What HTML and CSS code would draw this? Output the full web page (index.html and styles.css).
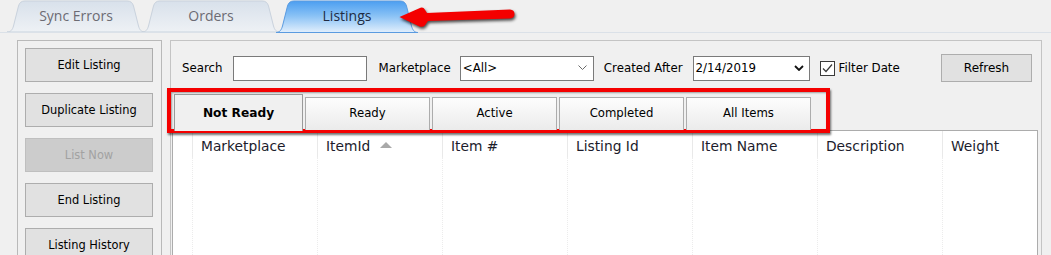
FILE: index.html
```html
<!DOCTYPE html>
<html>
<head>
<meta charset="utf-8">
<title>Listings</title>
<link rel="stylesheet" href="styles.css">
</head>
<body>
<div class="app">
  <div class="tabstrip">
    <div class="ttab">
      <svg class="tshape" width="138" height="32" viewBox="0 0 138 32">
        <defs>
          <linearGradient id="gU" x1="0" y1="0" x2="0" y2="1">
            <stop offset="0" stop-color="#d8e1eb"/>
            <stop offset="1" stop-color="#eef1f5"/>
          </linearGradient>
          <linearGradient id="gS" x1="0" y1="0" x2="0" y2="1">
            <stop offset="0" stop-color="#4c9ef0"/>
            <stop offset="0.45" stop-color="#86c0f5"/>
            <stop offset="1" stop-color="#e2effc"/>
          </linearGradient>
        </defs>
        <path d="M0,32 C4,32 5.5,29.5 6.5,26 L11.5,6 C12.5,2.5 14.5,1 18,1 L120,1 C123.5,1 125.5,2.5 126.5,6 L131.5,26 C132.5,29.5 134,32 138,32 Z" fill="url(#gU)" stroke="#c9d2dd" stroke-width="1"/>
      </svg>
      <span class="tlabel">Sync Errors</span>
    </div>
    <div class="ttab">
      <svg class="tshape" width="138" height="32" viewBox="0 0 138 32">
        <path d="M0,32 C4,32 5.5,29.5 6.5,26 L11.5,6 C12.5,2.5 14.5,1 18,1 L120,1 C123.5,1 125.5,2.5 126.5,6 L131.5,26 C132.5,29.5 134,32 138,32 Z" fill="url(#gU)" stroke="#c9d2dd" stroke-width="1"/>
      </svg>
      <span class="tlabel">Orders</span>
    </div>
    <div class="ttab sel">
      <svg class="tshape" width="142" height="33" viewBox="0 0 142 33">
        <path d="M0,32.5 C4,32.5 5.5,29.5 6.5,26 L11.5,6 C12.5,2.5 14.5,1 18,1 L124,1 C127.5,1 129.5,2.5 130.5,6 L135.5,26 C136.5,29.5 138,32.5 142,32.5 Z" fill="url(#gS)" stroke="#5a9be0" stroke-width="1"/>
      </svg>
      <span class="tlabel">Listings</span>
    </div>
  </div>

  <div class="main">
    <div class="leftpanel">
      <button class="btn">Edit Listing</button>
      <button class="btn">Duplicate Listing</button>
      <button class="btn disabled">List Now</button>
      <button class="btn">End Listing</button>
      <button class="btn">Listing History</button>
    </div>

    <div class="rightpanel">
      <div class="toolbar">
        <span class="lbl">Search</span>
        <div class="field search"></div>
        <span class="lbl lbl-mkt">Marketplace</span>
        <div class="field select mkt">
          <span>&lt;All&gt;</span>
          <svg class="chev" width="9" height="5" viewBox="0 0 9 5"><path d="M0.5,0.5 L4.5,4.5 L8.5,0.5" fill="none" stroke="#6a6a6a" stroke-width="1"/></svg>
        </div>
        <span class="lbl lbl-created">Created After</span>
        <div class="field select date">
          <span>2/14/2019</span>
          <svg class="chev" width="10" height="6" viewBox="0 0 10 6"><path d="M1,1 L5,5 L9,1" fill="none" stroke="#111" stroke-width="1.8"/></svg>
        </div>
        <span class="check"><svg width="13" height="13" viewBox="0 0 13 13"><path d="M2,6.5 L5,9.5 L11,2.5" fill="none" stroke="#3a3a3a" stroke-width="1.2"/></svg></span>
        <span class="lbl lbl-filter">Filter Date</span>
        <button class="btn refresh">Refresh</button>
      </div>

      <div class="tabctl">
        <div class="subtabs">
          <div class="stab sel">Not Ready</div>
          <div class="stab">Ready</div>
          <div class="stab">Active</div>
          <div class="stab">Completed</div>
          <div class="stab">All Items</div>
        </div>
        <div class="page">
          <div class="grid">
            <div class="hc rowhdr"></div>
            <div class="hc">Marketplace</div>
            <div class="hc">ItemId<span class="sort"></span></div>
            <div class="hc">Item #</div>
            <div class="hc">Listing Id</div>
            <div class="hc">Item Name</div>
            <div class="hc">Description</div>
            <div class="hc last">Weight</div>
            <div class="bc"></div>
            <div class="bc"></div>
            <div class="bc"></div>
            <div class="bc"></div>
            <div class="bc"></div>
            <div class="bc"></div>
            <div class="bc"></div>
            <div class="bc last"></div>
          </div>
        </div>
      </div>
    </div>
  </div>

  <div class="highlight"></div>
  <svg class="arrow" width="125" height="30" viewBox="395 2 125 30">
    <path d="M399.5,17 L420.5,7.8 Q423.5,7 424.8,9.5 L427,13 L510,9.5 Q514.5,9.8 514.5,14 Q514.5,18.2 510,18.5 L428,21 L425,25.2 Q423,27.6 419.5,26.4 Z" fill="#f40000"/>
  </svg>
</div>
</body>
</html>
```

FILE: styles.css
```css
* {
  box-sizing: border-box;
}

html,
body {
  margin: 0;
  padding: 0;
}

body {
  background: #f0f0f0;
  font-family: "DejaVu Sans", Verdana, sans-serif;
  color: #000;
  width: 1051px;
  height: 255px;
  overflow: hidden;
}

.app {
  position: relative;
  width: 1051px;
  height: 255px;
  overflow: hidden;
}

/* ---------- top tab strip ---------- */
.tabstrip {
  display: flex;
  height: 33px;
  padding-left: 7px;
  border-bottom: 1px solid #dbe1e8;
}

.ttab {
  display: grid;
  width: 138px;
  height: 33px;
}

.ttab > * {
  grid-area: 1 / 1;
}

.ttab + .ttab {
  margin-left: -3px;
}

.ttab.sel {
  width: 142px;
  margin-left: -4px;
}

.tshape {
  display: block;
}

.tlabel {
  font-family: "Open Sans", "Noto Sans", sans-serif;
  font-size: 14px;
  color: #6c6b73;
  display: flex;
  align-items: center;
  justify-content: center;
  padding-bottom: 3px;
}

.sel .tlabel {
  color: #202b42;
}

/* ---------- main area ---------- */
.main {
  display: flex;
  height: 300px;
  padding: 7px 0 0 17px;
}

.leftpanel {
  width: 145px;
  border: 1px solid #b9b9b9;
  display: flex;
  flex-direction: column;
  gap: 11px;
  padding: 7px 0 0 7px;
}

.btn {
  width: 128px;
  height: 34px;
  flex: none;
  background: #e1e1e1;
  border: 1px solid #adadad;
  font-family: "DejaVu Sans", Verdana, sans-serif;
  font-size: 11.4px;
  color: #000;
  padding: 0;
  margin: 0;
}

.btn.disabled {
  background: #cccccc;
  border-color: #bfbfbf;
  color: #a2a2a2;
}

.rightpanel {
  width: 872px;
  margin-left: 8px;
  border: 1px solid #c4c4c4;
  display: flex;
  flex-direction: column;
}

/* ---------- toolbar ---------- */
.toolbar {
  display: flex;
  align-items: center;
  height: 28px;
  margin-top: 13px;
  padding-left: 11px;
  font-size: 11.8px;
}

.lbl {
  white-space: nowrap;
}

.field {
  height: 25px;
  background: #fff;
  border: 1px solid #7a7a7a;
}

.search {
  width: 134px;
  margin-left: 10px;
}

.lbl-mkt {
  margin-left: 12px;
}

.select {
  display: flex;
  align-items: center;
  justify-content: space-between;
  padding: 0 6px 1px 2px;
}

.mkt {
  width: 134px;
  margin-left: 9px;
}

.lbl-created {
  margin-left: 10px;
}

.date {
  width: 117px;
  margin-left: 10px;
  padding-right: 5px;
}

.chev {
  display: block;
}

.check {
  width: 15px;
  height: 15px;
  margin-left: 10px;
  border: 1px solid #3a3a3a;
  background: #fff;
  display: flex;
  align-items: center;
  justify-content: center;
}

.check svg {
  display: block;
}

.lbl-filter {
  margin-left: 4px;
}

.refresh {
  width: 91px;
  height: 28px;
  margin-left: auto;
  margin-right: 9px;
  font-size: 12px;
}

/* ---------- sub tabs ---------- */
.tabctl {
  width: 866px;
  margin-left: 1px;
  margin-top: 12px;
  display: flex;
  flex-direction: column;
  flex: 1;
}

.subtabs {
  display: flex;
  align-items: flex-end;
  gap: 2px;
  height: 36px;
  padding-left: 2px;
  position: relative;
  z-index: 1;
}

.stab {
  width: 125px;
  height: 33px;
  border: 1px solid #acacac;
  border-bottom: none;
  background: linear-gradient(#fdfdfd, #ebebeb);
  display: flex;
  align-items: center;
  justify-content: center;
  font-size: 11.7px;
  color: #000;
  padding-bottom: 2px;
}

.stab.sel {
  width: 129px;
  height: 37px;
  margin-bottom: -1px;
  background: #f0f0f0;
  border-color: #9a9a9a;
  font-weight: bold;
  font-size: 12.2px;
  padding-bottom: 1px;
}

.page {
  flex: 1;
  border: 1px solid #acacac;
  background: #fff;
}

/* ---------- grid ---------- */
.grid {
  display: grid;
  grid-template-columns: 20px repeat(6, 125px) 1fr;
  grid-template-rows: 26px 1fr;
  height: 100%;
}

.hc {
  border-right: 1px solid #e9e9e9;
  font-size: 13.8px;
  line-height: 18px;
  color: #1c1c2c;
  padding: 6px 0 0 8px;
  white-space: nowrap;
}

.hc.rowhdr {
  padding: 0;
}

.bc {
  border-right: 1px dotted #ececec;
}

.last {
  border-right: none;
}

.sort {
  display: inline-block;
  width: 0;
  height: 0;
  margin-left: 10px;
  border-left: 6px solid transparent;
  border-right: 6px solid transparent;
  border-bottom: 6px solid #a9a9a9;
  vertical-align: 3px;
}

/* ---------- annotations ---------- */
.highlight {
  position: absolute;
  left: 167px;
  top: 88px;
  width: 663px;
  height: 45px;
  border: 4px solid #f40000;
  box-shadow: 1px 2px 2px rgba(0, 0, 0, 0.55), inset 1px 1px 2px rgba(0, 0, 0, 0.35);
  pointer-events: none;
}

.arrow {
  position: absolute;
  left: 395px;
  top: 2px;
  filter: drop-shadow(1px 2px 1.5px rgba(0, 0, 0, 0.7));
  pointer-events: none;
}
```
